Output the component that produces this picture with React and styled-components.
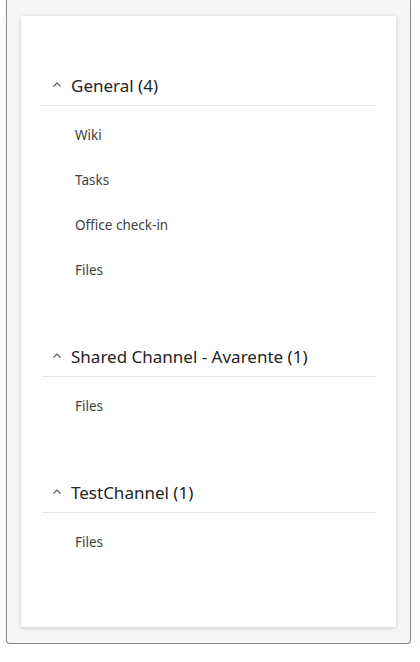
import React from 'react'
import styled, { createGlobalStyle } from 'styled-components'

const Global = createGlobalStyle`
  html, body { margin: 0; background: #fff; }
  body { font-family: "Segoe UI", "Noto Sans", "Open Sans", sans-serif; }
`

const Frame = styled.div`
  margin: 0 8px 0 6px;
  width: 405px;
  height: 644px;
  box-sizing: border-box;
  border: 1px solid #8a8a8a;
  border-top: none;
  border-radius: 0 0 4px 4px;
  background: #f6f6f6;
  padding: 16px 14px 0 14px;
  box-shadow: 0 8px 12px rgba(0, 0, 0, 0.05);
`

const Card = styled.div`
  background: #fff;
  height: 611px;
  box-sizing: border-box;
  padding: 49px 20px 0 21px;
  box-shadow: 0 1px 4px rgba(0, 0, 0, 0.18);
`

const Header = styled.div`
  height: 40px;
  display: flex;
  align-items: center;
  gap: 9px;
  padding-left: 10px;
  border-bottom: 1px solid #e6e6e6;
  font-size: 17px;
  color: #242424;
`

const List = styled.div`
  padding: 6px 0 44px 33px;
`

const Item = styled.div`
  height: 45px;
  display: flex;
  align-items: center;
  font-size: 13.5px;
  color: #424242;
`

const Chevron = () => (
  <svg width="10" height="10" viewBox="0 0 10 10" fill="none" stroke="#555" strokeWidth="1.1">
    <path d="M1.5 6.5 L5 3 L8.5 6.5" />
  </svg>
)

const sections = [
  { title: 'General (4)', items: ['Wiki', 'Tasks', 'Office check-in', 'Files'] },
  { title: 'Shared Channel - Avarente (1)', items: ['Files'] },
  { title: 'TestChannel (1)', items: ['Files'] },
]

export default function App () {
  return (
    <>
      <Global />
      <Frame>
        <Card>
          {sections.map(s => (
            <div key={s.title}>
              <Header><Chevron />{s.title}</Header>
              <List>
                {s.items.map(i => <Item key={i}>{i}</Item>)}
              </List>
            </div>
          ))}
        </Card>
      </Frame>
    </>
  )
}
